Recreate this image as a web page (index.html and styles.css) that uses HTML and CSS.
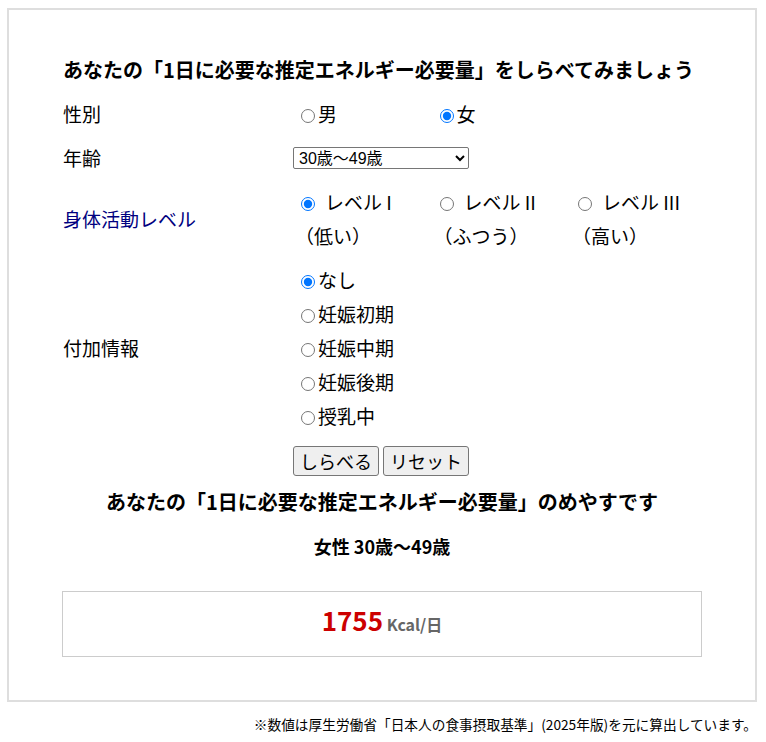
FILE: index.html
```html
<!DOCTYPE html>
<html lang="ja">
<head>
<meta charset="utf-8">
<title>推定エネルギー必要量</title>
<link rel="stylesheet" href="styles.css">
</head>
<body>
<div class="box">
  <h2 class="title">あなたの「1日に必要な推定エネルギー必要量」をしらべてみましょう</h2>
  <div class="form">
    <div class="label">性別</div>
    <div class="field">
      <label class="opt"><input type="radio" name="sex">男</label><label class="opt"><input type="radio" name="sex" checked>女</label>
    </div>

    <div class="label">年齢</div>
    <div class="field">
      <select class="age">
        <option>30歳〜49歳</option>
      </select>
    </div>

    <div class="label navy">身体活動レベル</div>
    <div class="field">
      <label class="opt lvl"><input type="radio" name="lvl" checked>レベル I<br>（低い）</label><label class="opt lvl"><input type="radio" name="lvl">レベル II<br>（ふつう）</label><label class="opt lvl"><input type="radio" name="lvl">レベル III<br>（高い）</label>
    </div>

    <div class="label">付加情報</div>
    <div class="field stack">
      <label class="opt"><input type="radio" name="add" checked>なし</label>
      <label class="opt"><input type="radio" name="add">妊娠初期</label>
      <label class="opt"><input type="radio" name="add">妊娠中期</label>
      <label class="opt"><input type="radio" name="add">妊娠後期</label>
      <label class="opt"><input type="radio" name="add">授乳中</label>
    </div>
  </div>
  <div class="buttons">
    <button type="button" class="btn">しらべる</button>
    <button type="button" class="btn">リセット</button>
  </div>
  <h3 class="result-title">あなたの「1日に必要な推定エネルギー必要量」のめやすです</h3>
  <p class="result-sub">女性 30歳〜49歳</p>
  <div class="result">
    <span class="kcal">1755</span> <span class="unit">Kcal/日</span>
  </div>
</div>
<p class="note">※数値は厚生労働省「日本人の食事摂取基準」(2025年版)を元に算出しています。</p>
</body>
</html>
```

FILE: styles.css
```css
html, body {
  background: #fff;
}
body {
  margin: 8px 9px 8px 7px;
  font-family: "Noto Sans CJK JP", "Noto Sans", sans-serif;
  color: #000;
}
.box {
  border: 2px solid #dedede;
  padding: 45px 53px 43px 53px;
}
.title {
  margin: 0 0 7px 1px;
  font-size: 20px;
  line-height: 30px;
  font-weight: bold;
}
.form {
  display: grid;
  grid-template-columns: 231px 1fr;
}
.label {
  padding: 5px 0 5px 1px;
  font-size: 19px;
  line-height: 34px;
  display: flex;
  align-items: center;
}
.navy {
  color: #000080;
}
.field {
  padding: 5px 0;
  font-size: 19px;
  line-height: 34px;
  display: flex;
  align-items: center;
  flex-wrap: nowrap;
  min-width: 0;
}
.field.stack {
  flex-direction: column;
  align-items: flex-start;
}
.opt {
  display: block;
  flex: 0 0 138.5px;
  width: 138.5px;
  padding-left: 2px;
  box-sizing: border-box;
  white-space: nowrap;
}
.stack .opt {
  flex: none;
  width: auto;
}
.opt input {
  margin: 0 3px 0 6px;
  width: 14px;
  height: 14px;
  vertical-align: -1px;
}
.lvl input {
  margin-right: 10px;
}
.lvl:last-child {
  flex: 0 0 auto;
  width: auto;
}
.age {
  width: 176px;
  height: 22px;
  font-family: "Liberation Sans", "Noto Sans CJK JP", sans-serif;
  font-size: 16px;
  border: 1px solid #767676;
  border-radius: 2px;
  background: #fff;
  color: #000;
  padding: 0 1px;
}
.buttons {
  display: flex;
  gap: 4px;
  margin: 8px 0 0 231px;
}
.btn {
  font-family: "Noto Sans CJK JP", sans-serif;
  font-size: 18px;
  line-height: 26px;
  height: 30px;
  padding: 1px 6px;
  border: 1px solid #767676;
  border-radius: 3px;
  background: #efefef;
  color: #000;
}
.result-title {
  margin: 11px 0 0;
  text-align: center;
  font-size: 20px;
  line-height: 30px;
  font-weight: bold;
}
.result-sub {
  margin: 16px 0 0;
  text-align: center;
  font-size: 18px;
  line-height: 27px;
  font-weight: bold;
}
.result {
  margin-top: 31px;
  border: 1px solid #cccccc;
  padding: 12px 0;
  height: 40px;
  line-height: 40px;
  font-size: 16px;
  text-align: center;
}
.kcal {
  color: #cc0000;
  font-size: 26px;
  line-height: 1;
  font-weight: bold;
}
.unit {
  color: #666;
  font-size: 16px;
  line-height: 1;
  font-weight: bold;
}
.note {
  margin: 12px 0 0 0;
  text-align: right;
  font-size: 13.7px;
  line-height: 20px;
}
```
